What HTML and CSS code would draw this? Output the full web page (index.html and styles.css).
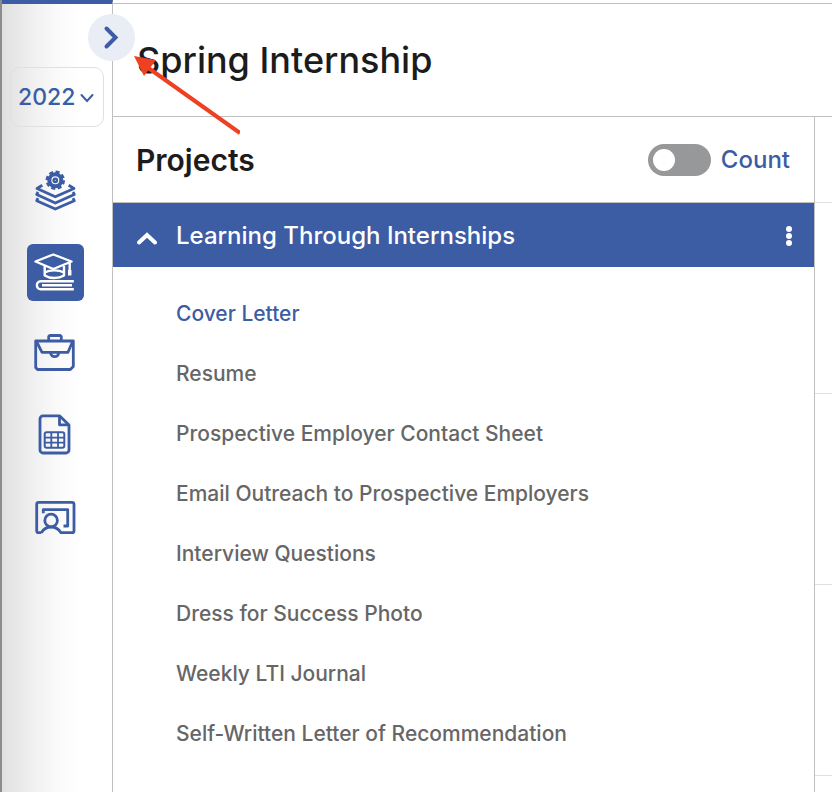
FILE: index.html
```html
<!DOCTYPE html>
<html lang="en">
<head>
    <meta charset="UTF-8">
    <meta name="viewport" content="width=device-width, initial-scale=1">
    <title>Spring Internship</title>
    <link rel="stylesheet" href="styles.css">
</head>
<body>
    <div class="app">
        <aside class="sidebar">
            <button class="expand" type="button" aria-label="Expand menu">
                <svg width="47" height="47" viewBox="0 0 47 47"><path d="M18.500 14.500l9 9-9 9"/></svg>
            </button>
            <div class="year">
                <select aria-label="Year">
                    <option>2022</option>
                    <option>2021</option>
                </select>
                <svg width="14" height="10" viewBox="0 0 14 10"><path d="M1.500 2L7 8l5.500-6"/></svg>
            </div>
            <nav class="menu">
                <a href="#" aria-label="Programs">
                    <svg viewBox="0 0 57 57">
                        <circle cx="28.300" cy="18.300" r="6" stroke-width="4"/>
                        <circle cx="28.300" cy="18.300" r="8.300" stroke-width="2.800" stroke-dasharray="4 2.520"/>
                        <circle cx="28.300" cy="18.300" r="1.700" stroke-width="2.400"/>
                        <path d="M15.300 23.300L10 26.500l18.300 8.300 18.700-8.300-5.300-3.200"/>
                        <path d="M11 30l-1.300 2.500 18.600 8.500 19-8.500L46 30"/>
                        <path d="M11 36.200l-1.300 2.500L28.300 47l19-8.300-1.300-2.500"/>
                    </svg>
                </a>
                <a class="active" href="#" aria-label="Courses">
                    <svg viewBox="0 0 57 57">
                        <path d="M26.300 10.500L8.500 17.500l17.800 7.500 18.200-7.500z"/>
                        <path d="M17.700 22v9.500c5 3.300 14 3.300 19.300 0V22M17.700 28.500c5-2.800 14-2.800 19.300 0"/>
                        <path d="M42.700 18.500V26"/>
                        <path d="M42.700 26v5.500" stroke-width="3.500"/>
                        <path d="M46.800 37.300h-33c-5.200 0-5.200 8 0 8h33M15 41.300h30"/>
                    </svg>
                </a>
                <a href="#" aria-label="Work">
                    <svg viewBox="0 0 57 57">
                        <path d="M8.700 15h37.600v25.500L43.300 43.500H10.500l-1.800-2z"/>
                        <path d="M21.700 15v-4.500l1-1h10.600l1 1V15"/>
                        <path d="M9.500 15.500L15 26.300h26l4.600-10.800"/>
                        <path d="M23.700 26.500c0 5.600 8 5.600 8 0"/>
                    </svg>
                </a>
                <a href="#" aria-label="Reports">
                    <svg viewBox="0 0 57 57">
                        <path d="M32.500 7.800H16a3 3 0 0 0-3 3V42a3 3 0 0 0 3 3h23a3 3 0 0 0 3-3V17z"/>
                        <path d="M32.500 8v8.800H42"/>
                        <rect x="17.700" y="24.300" width="19.600" height="15.400" rx="2" stroke-width="2"/>
                        <path d="M24.300 24.300v15.400M31 24.300v15.400M17.700 29.600h19.600M17.700 34.600h19.600" stroke-width="1.800"/>
                    </svg>
                </a>
                <a href="#" aria-label="Instructors">
                    <svg viewBox="0 0 57 57">
                        <path d="M14.300 42.700h-2.600a2 2 0 0 1-2-2V14.300a2 2 0 0 1 2-2H45a2 2 0 0 1 2 2v26.400a2 2 0 0 1-2 2H34c-2.500-3.800-5.500-5.700-9.900-5.700s-7.400 2-9.800 5.700"/>
                        <circle cx="24.100" cy="30.500" r="6.300"/>
                        <path d="M16.300 23.300v-3.600h24.400V36h-4.200"/>
                    </svg>
                </a>
            </nav>
        </aside>

        <main class="main">
            <header class="page-header">
                <h1>Spring Internship</h1>
            </header>
            <div class="content">
                <section class="projects">
                    <div class="projects-header">
                        <h2>Projects</h2>
                        <label class="count" for="count">
                            <input type="checkbox" id="count">
                            Count
                        </label>
                    </div>
                    <div class="group">
                        <button class="collapse" type="button" aria-label="Collapse">
                            <svg width="20" height="18" viewBox="0 0 20 18"><path d="M2 15.500L10 8l8 7.500"/></svg>
                        </button>
                        <h3>Learning Through Internships</h3>
                        <button class="more" type="button" aria-label="More options">
                            <svg width="6" height="20" viewBox="0 0 6 20"><circle cx="3" cy="3" r="3"/><circle cx="3" cy="10" r="3"/><circle cx="3" cy="17" r="3"/></svg>
                        </button>
                    </div>
                    <ul class="project-list">
                        <li><a class="current" href="#">Cover Letter</a></li>
                        <li><a href="#">Resume</a></li>
                        <li><a href="#">Prospective Employer Contact Sheet</a></li>
                        <li><a href="#">Email Outreach to Prospective Employers</a></li>
                        <li><a href="#">Interview Questions</a></li>
                        <li><a href="#">Dress for Success Photo</a></li>
                        <li><a href="#">Weekly LTI Journal</a></li>
                        <li><a href="#">Self-Written Letter of Recommendation</a></li>
                    </ul>
                </section>
                <div class="details">
                    <div class="detail-head"></div>
                    <div class="detail-row"></div>
                    <div class="detail-row"></div>
                    <div class="detail-row"></div>
                </div>
            </div>
        </main>

        <svg class="pointer" width="110" height="82" viewBox="0 0 110 82">
            <path d="M17 12l93 66" stroke="#ee4023" stroke-width="4"/>
            <path d="M4 1l22 4-12 16z" fill="#ee4023"/>
        </svg>
    </div>
</body>
</html>
```
FILE: styles.css
```css
* {
    box-sizing: border-box;
}

body {
    margin: 0;
    font-family: Inter, "Liberation Sans", sans-serif;
    font-weight: 500;
    color: #1c1c1c;
    background: #fff;
}

h1, h2, h3, ul {
    margin: 0;
    padding: 0;
}

h1, h2, h3 {
    font-weight: 500;
}

a {
    text-decoration: none;
}

button {
    padding: 0;
    border: 0;
    background: none;
    cursor: pointer;
}

svg {
    display: block;
    fill: none;
}

.app {
    position: relative;
    display: flex;
    min-height: 100vh;
    border-left: 2px solid #8c8c8c;
}

/* sidebar */
.sidebar {
    position: relative;
    flex: none;
    width: 111px;
    padding: 63px 8px 0;
    border-top: 4px solid #3c5ca4;
    border-right: 1px solid #c0c0c0;
    background: linear-gradient(to right, #e0e0e0, #f0f0f0 28%, #fafafa 50%, #fff 72%);
}

.expand {
    position: absolute;
    z-index: 1;
    top: 10px;
    right: -23px;
    width: 47px;
    height: 47px;
    border-radius: 50%;
    background: #e9edf6;
}

.expand path {
    stroke: #3c5ca4;
    stroke-width: 4;
    stroke-linecap: round;
}

.year {
    position: relative;
    height: 60px;
}

.year select {
    width: 100%;
    height: 100%;
    padding: 0 7px;
    border: 1px solid #e0e0e0;
    border-radius: 10px;
    appearance: none;
    background: none;
    font: 500 23px Inter, "Liberation Sans", sans-serif;
    color: #3c5ca4;
}

.year svg {
    position: absolute;
    top: 26px;
    right: 10px;
    pointer-events: none;
}

.year path {
    stroke: #3c5ca4;
    stroke-width: 2;
    stroke-linecap: round;
}

.menu {
    display: flex;
    flex-direction: column;
    gap: 25px;
    padding: 35px 0 0 17px;
}

.menu a {
    width: 57px;
    height: 57px;
    border-radius: 6px;
    color: #3c5ca4;
}

.menu a.active {
    background: #3c5ca4;
    color: #fff;
}

.menu svg {
    stroke: currentColor;
    stroke-width: 2.8;
    stroke-linejoin: round;
}

.menu a.active svg {
    stroke-width: 2.4;
}

/* main area */
.main {
    flex: 1;
    display: flex;
    flex-direction: column;
    min-width: 0;
    padding-top: 3px;
}

.page-header {
    padding: 35px 24px;
    border-top: 1px solid #c0c0c0;
    border-bottom: 1px solid #c0c0c0;
}

h1 {
    font-size: 36px;
    line-height: 42px;
}

.content {
    flex: 1;
    display: flex;
}

.projects {
    flex: 1;
    border-right: 1px solid #c0c0c0;
}

.projects-header {
    display: flex;
    align-items: center;
    justify-content: space-between;
    height: 86px;
    padding: 0 24px 0 23px;
    border-bottom: 1px solid #c0c0c0;
}

h2 {
    font-size: 30px;
    line-height: 36px;
    font-weight: 600;
}

.count {
    display: flex;
    align-items: center;
    gap: 10px;
    font-size: 24px;
    line-height: 32px;
    color: #3c5ca4;
}

.count input {
    appearance: none;
    width: 63px;
    height: 32px;
    margin: 0;
    padding: 5px;
    border-radius: 16px;
    background: #97989a;
}

.count input::before {
    content: "";
    display: block;
    width: 22px;
    height: 22px;
    border-radius: 50%;
    background: #fff;
}

.count input:checked {
    background: #3c5ca4;
}

.count input:checked::before {
    margin-left: auto;
}

.group {
    display: flex;
    align-items: center;
    gap: 19px;
    height: 64px;
    padding: 1px 22px 0 24px;
    background: #3c5ca4;
    color: #fff;
}

.group h3 {
    flex: 1;
    font-size: 24px;
    line-height: 32px;
}

.collapse path {
    stroke: #fff;
    stroke-width: 4;
    stroke-linecap: round;
}

.more circle {
    fill: #fff;
}

.project-list {
    padding: 17px 24px 0 63px;
    list-style: none;
}

.project-list a {
    display: block;
    font-size: 21px;
    line-height: 60px;
    color: #666;
}

.project-list a.current {
    color: #3c5ca4;
}

.details {
    width: 17px;
}

.detail-head {
    height: 86px;
    border-bottom: 1px solid #e0e0e0;
}

.detail-row {
    height: 191px;
    border-bottom: 1px solid #e0e0e0;
}

/* red arrow over the page */
.pointer {
    position: absolute;
    z-index: 2;
    top: 55px;
    left: 128px;
    pointer-events: none;
}
```
